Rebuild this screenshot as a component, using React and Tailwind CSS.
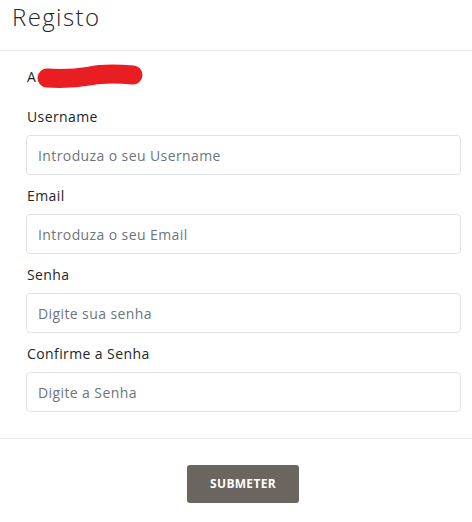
export default function App() {
  const fields = [
    { label: "Username", placeholder: "Introduza o seu Username", type: "text" },
    { label: "Email", placeholder: "Introduza o seu Email", type: "email" },
    { label: "Senha", placeholder: "Digite sua senha", type: "password" },
    { label: "Confirme a Senha", placeholder: "Digite a Senha", type: "password" },
  ];

  return (
    <div className="w-[472px] h-[522px] bg-white text-[#212529] font-['Open_Sans',sans-serif] overflow-hidden">
      {/* header */}
      <div className="h-[51px] border-b border-[#e9ecef] pl-[12px] pt-[1px]">
        <h1 className="text-[24px] leading-[32px] font-light tracking-[1.4px]">Registo</h1>
      </div>

      {/* body */}
      <div className="pl-[26px] pr-[11px] pt-[15px] pb-[26px] border-b border-[#e9ecef]">
        <div className="relative h-[22px] pl-[1px] text-[14px] leading-[22px] mb-[18px]">
          A
          <svg className="absolute left-0 top-0 overflow-visible" width="120" height="22" viewBox="0 0 120 22">
            <path
              d="M21 12 C38 13 52 12 64 10 C78 7 94 8 107 9"
              stroke="#e81e22"
              strokeWidth="19"
              strokeLinecap="round"
              fill="none"
            />
          </svg>
        </div>

        <form className="flex flex-col">
          {fields.map((f, i) => (
            <div key={f.label} className={i < fields.length - 1 ? "mb-[10px]" : ""}>
              <label className="block pl-[1px] text-[14px] leading-[21px] mb-[8px] tracking-[0.4px]">{f.label}</label>
              <input
                type={f.type}
                placeholder={f.placeholder}
                className="block w-full h-[40px] px-[11px] border border-[#dee2e6] rounded-[4px] text-[14px] tracking-[0.4px] placeholder:text-[#6c757d] outline-none"
              />
            </div>
          ))}
        </form>
      </div>

      {/* footer */}
      <div className="flex justify-center pl-[14px] pt-[26px]">
        <button className="w-[112px] h-[38px] rounded-[3px] bg-[#6a655e] text-white text-[12px] font-bold tracking-[0.3px]">
          SUBMETER
        </button>
      </div>
    </div>
  );
}
